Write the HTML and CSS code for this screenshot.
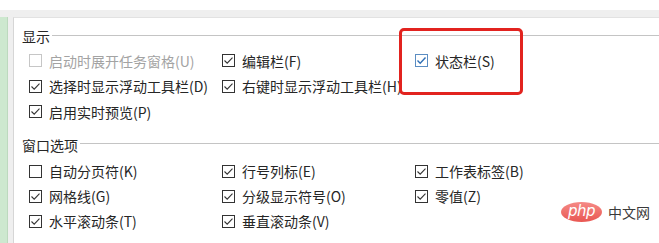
FILE: index.html
```html
<html>
<head>
<meta charset="UTF-8">
<title>Excel 选项 - 显示</title>
<link rel="stylesheet" href="styles.css">
</head>
<body>
<div class="page">
	<div class="topGap"></div>
	<div class="frame">
		<div class="greenStrip"></div>
		<div class="panel">

			<div class="groupTitle"><span>显示</span><i class="rule"></i></div>
			<div class="options first">
				<label class="opt disabled"><svg class="box" width="13" height="13"><rect x="0.5" y="0.5" width="12" height="12"/></svg>启动时展开任务窗格(U)</label>
				<label class="opt"><svg class="box" width="13" height="13"><rect x="0.5" y="0.5" width="12" height="12"/><path d="M2.5 6.5 L5.2 9.2 L10.5 3.6"/></svg>编辑栏(F)</label>
				<label class="opt hover"><svg class="box" width="13" height="13"><rect x="0.5" y="0.5" width="12" height="12"/><path d="M2.5 6.5 L5.2 9.2 L10.5 3.6"/></svg>状态栏(S)</label>

				<label class="opt"><svg class="box" width="13" height="13"><rect x="0.5" y="0.5" width="12" height="12"/><path d="M2.5 6.5 L5.2 9.2 L10.5 3.6"/></svg>选择时显示浮动工具栏(D)</label>
				<label class="opt"><svg class="box" width="13" height="13"><rect x="0.5" y="0.5" width="12" height="12"/><path d="M2.5 6.5 L5.2 9.2 L10.5 3.6"/></svg>右键时显示浮动工具栏(H)</label>
				<span></span>

				<label class="opt"><svg class="box" width="13" height="13"><rect x="0.5" y="0.5" width="12" height="12"/><path d="M2.5 6.5 L5.2 9.2 L10.5 3.6"/></svg>启用实时预览(P)</label>
			</div>

			<div class="groupTitle second"><span>窗口选项</span><i class="rule"></i></div>
			<div class="options window">
				<label class="opt"><svg class="box" width="13" height="13"><rect x="0.5" y="0.5" width="12" height="12"/></svg>自动分页符(K)</label>
				<label class="opt"><svg class="box" width="13" height="13"><rect x="0.5" y="0.5" width="12" height="12"/><path d="M2.5 6.5 L5.2 9.2 L10.5 3.6"/></svg>行号列标(E)</label>
				<label class="opt"><svg class="box" width="13" height="13"><rect x="0.5" y="0.5" width="12" height="12"/><path d="M2.5 6.5 L5.2 9.2 L10.5 3.6"/></svg>工作表标签(B)</label>

				<label class="opt"><svg class="box" width="13" height="13"><rect x="0.5" y="0.5" width="12" height="12"/><path d="M2.5 6.5 L5.2 9.2 L10.5 3.6"/></svg>网格线(G)</label>
				<label class="opt"><svg class="box" width="13" height="13"><rect x="0.5" y="0.5" width="12" height="12"/><path d="M2.5 6.5 L5.2 9.2 L10.5 3.6"/></svg>分级显示符号(O)</label>
				<label class="opt"><svg class="box" width="13" height="13"><rect x="0.5" y="0.5" width="12" height="12"/><path d="M2.5 6.5 L5.2 9.2 L10.5 3.6"/></svg>零值(Z)</label>

				<label class="opt"><svg class="box" width="13" height="13"><rect x="0.5" y="0.5" width="12" height="12"/><path d="M2.5 6.5 L5.2 9.2 L10.5 3.6"/></svg>水平滚动条(T)</label>
				<label class="opt"><svg class="box" width="13" height="13"><rect x="0.5" y="0.5" width="12" height="12"/><path d="M2.5 6.5 L5.2 9.2 L10.5 3.6"/></svg>垂直滚动条(V)</label>
			</div>
		</div>
	</div>

	<!-- annotation drawn on top of the screenshot -->
	<div class="highlight"></div>

	<div class="watermark">
		<span class="phpBadge">php</span><span class="siteName">中文网</span>
	</div>
</div>
</body>
</html>
```
FILE: styles.css
```css
body{
	margin:0;
	background:white;
	font-family:"Noto Sans CJK SC","Noto Sans",sans-serif;
	font-size:14px;
	color:#262626;
}

.page{
	position:relative;
	width:659px;
	height:243px;
	overflow:hidden;
}

.topGap{
	height:10px;
	background:white;
}

.frame{
	display:flex;
	height:233px;
	padding-top:7px;
	box-sizing:border-box;
	background:#efefef;
}

.greenStrip{
	width:7px;
	background:#cde8cf;
	border-right:1px solid #bcd9be;
}

.panel{
	flex:1;
	margin-left:5px;
	padding:8px 0 0 8px;
	background:white;
	border-left:1px solid #d6d6d6;
	border-top:1px solid #e2e2e2;
}

.groupTitle{
	display:flex;
	align-items:center;
	height:20px;
	line-height:20px;
}

.groupTitle.second{
	margin-top:10px;
}

.rule{
	flex:1;
	height:0;
	margin:-2px 0 0 2px;
	border-top:1px solid #c4c4c4;
}

.options{
	display:grid;
	grid-template-columns:193px 193px 1fr;
	grid-auto-rows:25.5px;
	margin-top:2px;
	padding-left:7px;
}

.options.window{
	grid-auto-rows:25px;
	margin-top:4px;
}

.opt{
	display:flex;
	align-items:center;
	white-space:nowrap;
}

.box{
	flex:none;
	margin-right:7px;
}

.box rect{
	fill:white;
	stroke:#333;
	stroke-width:1;
}

.box path{
	fill:none;
	stroke:#333;
	stroke-width:1.1;
}

.opt.disabled{
	color:#a3a3a3;
}

.opt.disabled .box rect{
	stroke:#c6c6c6;
}

.opt.hover .box rect{
	stroke:#5b8dc2;
}

.opt.hover .box path{
	stroke:#2f6fb5;
	stroke-width:1.4;
}

.highlight{
	position:absolute;
	left:399px;
	top:28px;
	width:118px;
	height:61px;
	border:3px solid #e2231f;
	border-radius:5px;
}

.watermark{
	position:absolute;
	left:561px;
	top:202px;
	display:flex;
	align-items:center;
}

.phpBadge{
	width:41px;
	height:20px;
	border-radius:50%;
	background:linear-gradient(180deg,#f58a86,#e95752);
	color:white;
	font-family:"DejaVu Sans",sans-serif;
	font-style:italic;
	font-size:15px;
	line-height:18px;
	text-align:center;
	letter-spacing:-0.5px;
}

.siteName{
	margin-left:6px;
	font-size:14px;
	color:#3a3a3a;
}
```
